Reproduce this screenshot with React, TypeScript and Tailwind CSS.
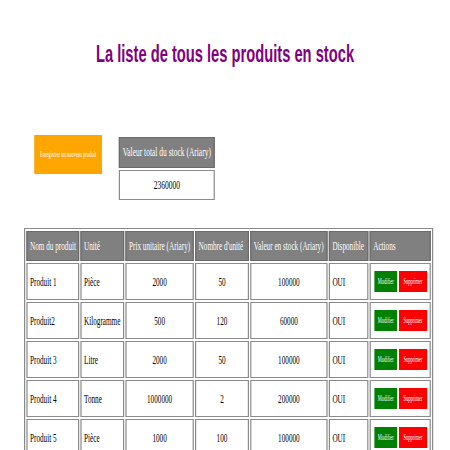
const produits = [
  { nom: "Produit 1", unite: "Pièce", prix: "2000", nombre: "50", valeur: "100000", dispo: "OUI" },
  { nom: "Produit2", unite: "Kilogramme", prix: "500", nombre: "120", valeur: "60000", dispo: "OUI" },
  { nom: "Produit 3", unite: "Litre", prix: "2000", nombre: "50", valeur: "100000", dispo: "OUI" },
  { nom: "Produit 4", unite: "Tonne", prix: "1000000", nombre: "2", valeur: "200000", dispo: "OUI" },
  { nom: "Produit 5", unite: "Pièce", prix: "1000", nombre: "100", valeur: "100000", dispo: "OUI" },
];

const th = "h-[30px] bg-[#808080] px-[4px] text-left font-normal whitespace-nowrap text-white border-y border-x-2 border-[#6b6b6b]";
const td = "h-[37px] px-[4px] whitespace-nowrap border-y border-x-2 border-[#8a8a8a]";

const App = () => {
  return (
    <main className="w-[750px] origin-top-left scale-x-[0.6] bg-white font-['Liberation_Serif',serif] text-[12px] text-black">
      <h1 className="pt-[39px] text-center font-['Liberation_Sans',Arial,sans-serif] text-[24.5px] leading-[30px] font-bold text-[#800080]">
        La liste de tous les produits en stock
      </h1>

      {/* bouton + valeur totale */}
      <section className="mt-[66px] ml-[57px] flex items-start gap-[28px]">
        <button className="h-[39px] w-[113px] bg-[#ffa500] text-[7.5px] whitespace-nowrap text-white">
          Enregistrer un nouveau produit
        </button>
        <div className="mt-[2px] flex w-[160px] flex-col gap-[2px] text-[12.5px]">
          <div className="flex h-[31px] items-center justify-center whitespace-nowrap border-y border-x-2 border-[#6b6b6b] bg-[#808080] text-white">
            Valeur total du stock (Ariary)
          </div>
          <div className="flex h-[30px] items-center justify-center border-y border-x-2 border-[#8a8a8a]">
            2360000
          </div>
        </div>
      </section>

      {/* tableau des produits */}
      <table className="mt-[28px] ml-[40px] w-[682px] table-fixed border-separate border-spacing-[2px] border-y border-x-2 border-[#8a8a8a]">
        <thead>
          <tr>
            <th className={`${th} w-[88px]`}>Nom du produit</th>
            <th className={`${th} w-[73px]`}>Unité</th>
            <th className={`${th} w-[114px]`}>Prix unitaire (Ariary)</th>
            <th className={`${th} w-[90px]`}>Nombre d'unité</th>
            <th className={`${th} w-[129px]`}>Valeur en stock (Ariary)</th>
            <th className={`${th} w-[66px]`}>Disponible</th>
            <th className={th}>Actions</th>
          </tr>
        </thead>
        <tbody>
          {produits.map((p) => (
            <tr key={p.nom}>
              <td className={td}>{p.nom}</td>
              <td className={td}>{p.unite}</td>
              <td className={`${td} text-center`}>{p.prix}</td>
              <td className={`${td} text-center`}>{p.nombre}</td>
              <td className={`${td} text-center`}>{p.valeur}</td>
              <td className={td}>{p.dispo}</td>
              <td className={`${td} pl-[6px]`}>
                <div className="flex gap-[3px]">
                  <button className="h-[21px] w-[38px] bg-[#008000] text-[7.5px] text-white">Modifier</button>
                  <button className="h-[21px] w-[47px] bg-[#ff0000] text-[7.5px] text-white">Supprimer</button>
                </div>
              </td>
            </tr>
          ))}
        </tbody>
      </table>
    </main>
  );
};

export default App;
